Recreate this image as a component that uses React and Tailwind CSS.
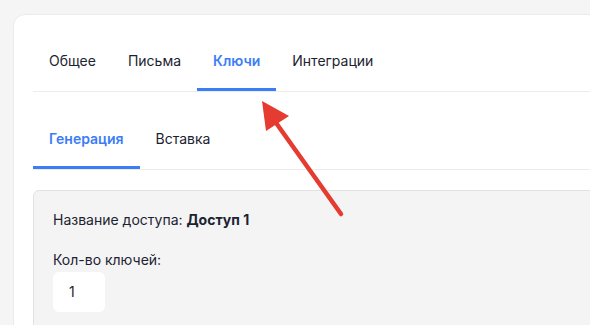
import React from 'react';

const topTabs = ['Общее', 'Письма', 'Ключи', 'Интеграции'];
const subTabs = ['Генерация', 'Вставка'];

const Tab = ({ label, active }) => (
  <div
    className={
      'px-4 pt-[17px] pb-[17px] border-b-[3px] text-sm leading-5 ' +
      (active ? 'border-[#3b7df6] text-[#3b7df6] font-semibold' : 'border-transparent text-[#1c2330]')
    }
  >
    {label}
  </div>
);

const App = () => {
  return (
    <div
      className="relative h-[325px] w-[590px] overflow-hidden bg-[#f5f5f5] pl-[13px] pt-[14px]"
      style={{ fontFamily: 'Inter, "Noto Sans", sans-serif' }}
    >
      <div className="h-[400px] w-[640px] rounded-xl border border-[#ebebeb] bg-white px-[19px] pt-[19px]">
        {/* main tabs */}
        <div className="flex border-b border-[#ececec]">
          {topTabs.map((t) => (
            <Tab key={t} label={t} active={t === 'Ключи'} />
          ))}
        </div>

        {/* sub tabs */}
        <div className="mt-5 flex border-b border-[#ececec]">
          {subTabs.map((t) => (
            <Tab key={t} label={t} active={t === 'Генерация'} />
          ))}
        </div>

        {/* form panel */}
        <div className="mt-5 rounded-md border border-[#e2e2e2] bg-[#f4f4f5] px-[19px] pt-[19px] pb-6 text-sm leading-5 text-[#1c2330]">
          <div>
            Название доступа: <span className="font-bold">Доступ 1</span>
          </div>
          <div className="mt-5">Кол-во ключей:</div>
          <div className="mt-0.5 flex h-10 w-[52px] items-center rounded-md bg-white px-4 text-[#1c2330]">
            1
          </div>
        </div>
      </div>

      {/* annotation arrow */}
      <svg className="pointer-events-none absolute left-0 top-0" width="590" height="325">
        <line x1="341" y1="214" x2="274" y2="120" stroke="#e53b30" strokeWidth="4.5" strokeLinecap="round" />
        <polygon points="262,101 266,131 289,116" fill="#e53b30" />
      </svg>
    </div>
  );
};

export default App;
